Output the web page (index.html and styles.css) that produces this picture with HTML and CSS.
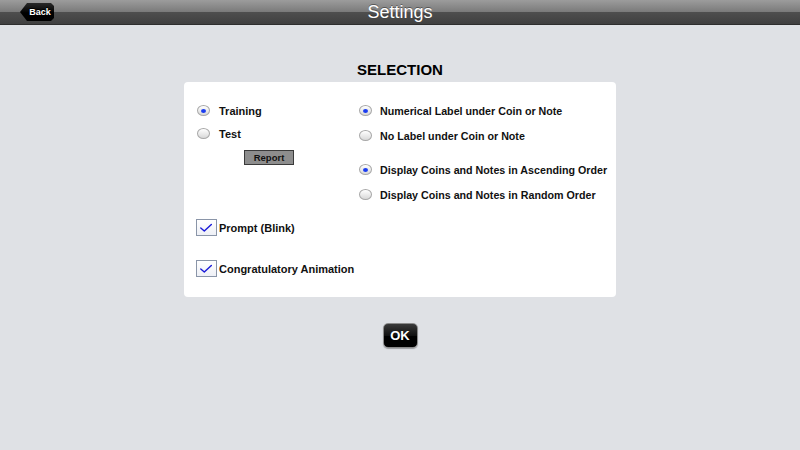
FILE: index.html
```html
<!DOCTYPE html>
<html>
<head>
<meta charset="utf-8">
<link rel="stylesheet" href="styles.css">
</head>
<body>
<header class="topbar">
  <div class="topbar-left"><button class="back">Back</button></div>
  <h1 class="title">Settings</h1>
  <div></div>
</header>
<main class="content">
  <h2 class="section-title">SELECTION</h2>
  <section class="panel">
    <div class="col-left">
      <div class="row"><span class="radio on"></span><span class="label">Training</span></div>
      <div class="row"><span class="radio"></span><span class="label">Test</span></div>
      <button class="report">Report</button>
      <div class="check-row first"><span class="checkbox"><svg viewBox="0 0 21 17" width="19" height="15"><path d="M4 9 L8 12.5 L16 5" fill="none" stroke="#1a1ad8" stroke-width="1.6" stroke-linecap="round" stroke-linejoin="round"/></svg></span><span class="label">Prompt (Blink)</span></div>
      <div class="check-row"><span class="checkbox"><svg viewBox="0 0 21 17" width="19" height="15"><path d="M4 9 L8 12.5 L16 5" fill="none" stroke="#1a1ad8" stroke-width="1.6" stroke-linecap="round" stroke-linejoin="round"/></svg></span><span class="label">Congratulatory Animation</span></div>
    </div>
    <div class="col-right">
      <div class="row r"><span class="radio on"></span><span class="label">Numerical Label under Coin or Note</span></div>
      <div class="row r"><span class="radio"></span><span class="label">No Label under Coin or Note</span></div>
      <div class="row r gap"><span class="radio on"></span><span class="label">Display Coins and Notes in Ascending Order</span></div>
      <div class="row r"><span class="radio"></span><span class="label">Display Coins and Notes in Random Order</span></div>
    </div>
  </section>
  <button class="ok">OK</button>
</main>
</body>
</html>
```
FILE: styles.css
```css
html, body {
  margin: 0;
  padding: 0;
}
body {
  background: #dfe1e5;
  font-family: "Liberation Sans", Arial, sans-serif;
  width: 800px;
  height: 450px;
  overflow: hidden;
}
.topbar {
  height: 24px;
  border-bottom: 1px solid #2e2e2e;
  background: linear-gradient(#9c9c9c 0, #7a7a7a 50%, #4e4e4e 52%, #404040 100%);
  display: grid;
  grid-template-columns: 1fr auto 1fr;
  align-items: center;
}
.topbar-left {
  padding-left: 20px;
  display: flex;
  align-items: center;
}
.back {
  width: 34px;
  height: 18px;
  border: none;
  padding: 0 0 0 6px;
  background: linear-gradient(#2a2a2a, #000 55%);
  color: #fff;
  font-family: "Liberation Sans", Arial, sans-serif;
  font-weight: bold;
  font-size: 9px;
  clip-path: polygon(0 50%, 7px 0, calc(100% - 3px) 0, 100% 3px, 100% calc(100% - 3px), calc(100% - 3px) 100%, 7px 100%);
  text-shadow: 0 -1px 0 #000;
}
.title {
  margin: 0;
  color: #fff;
  font-weight: normal;
  font-size: 18px;
  line-height: 24px;
  text-shadow: 0 -1px 0 rgba(0,0,0,0.4);
}
.content {
  display: flex;
  flex-direction: column;
  align-items: center;
}
.section-title {
  margin: 36px 0 0;
  font-size: 15px;
  line-height: 18px;
  font-weight: bold;
  color: #000;
}
.panel {
  margin-top: 3px;
  width: 432px;
  height: 215px;
  box-sizing: border-box;
  background: #fff;
  border-radius: 4px;
  display: flex;
  padding: 17px 0 0 13px;
}
.col-left {
  width: 162px;
  display: flex;
  flex-direction: column;
}
.col-left .label {
  font-size: 11px;
}
.col-right {
  display: flex;
  flex-direction: column;
  margin-top: -1px;
}
.row {
  height: 23px;
  display: flex;
  align-items: center;
}
.row.r {
  height: 25px;
}
.row.r.gap {
  margin-top: 9px;
}
.label {
  font-size: 10.7px;
  font-weight: bold;
  color: #111;
  white-space: nowrap;
}
.radio {
  width: 11px;
  height: 9px;
  border: 1px solid #a8a8a8;
  border-radius: 50%;
  background: linear-gradient(#ffffff, #d8d8d8);
  display: flex;
  align-items: center;
  justify-content: center;
  margin-right: 9px;
  flex: none;
}
.row.r .radio {
  margin-right: 8px;
}
.radio.on::after {
  content: "";
  width: 5px;
  height: 4px;
  border-radius: 50%;
  background: #1a3cf0;
}
.report {
  margin: 5px 0 0 47px;
  width: 50px;
  height: 15px;
  padding: 0;
  background: #8d8d8d;
  border: 1px solid #3a3a3a;
  font-family: "Liberation Sans", Arial, sans-serif;
  font-weight: bold;
  font-size: 9.5px;
  color: #111;
  line-height: 13px;
}
.check-row {
  display: flex;
  align-items: center;
  margin-left: -1px;
  margin-top: 24px;
  gap: 2px;
}
.check-row.first {
  margin-top: 54px;
}
.checkbox {
  width: 19px;
  height: 15px;
  border: 1px solid #8a95a8;
  background: linear-gradient(#ffffff, #eef0f6);
  display: flex;
  flex: none;
}
.ok {
  margin-top: 26px;
  width: 35px;
  height: 25px;
  padding: 0;
  border: 1px solid #8a8a8a;
  border-radius: 5px;
  background: linear-gradient(#3a3a3a 0, #111 50%, #000 51%, #000 100%);
  color: #fff;
  font-family: "Liberation Sans", Arial, sans-serif;
  font-weight: bold;
  font-size: 13px;
  box-shadow: 0 1px 1px rgba(0,0,0,0.3);
}
```
